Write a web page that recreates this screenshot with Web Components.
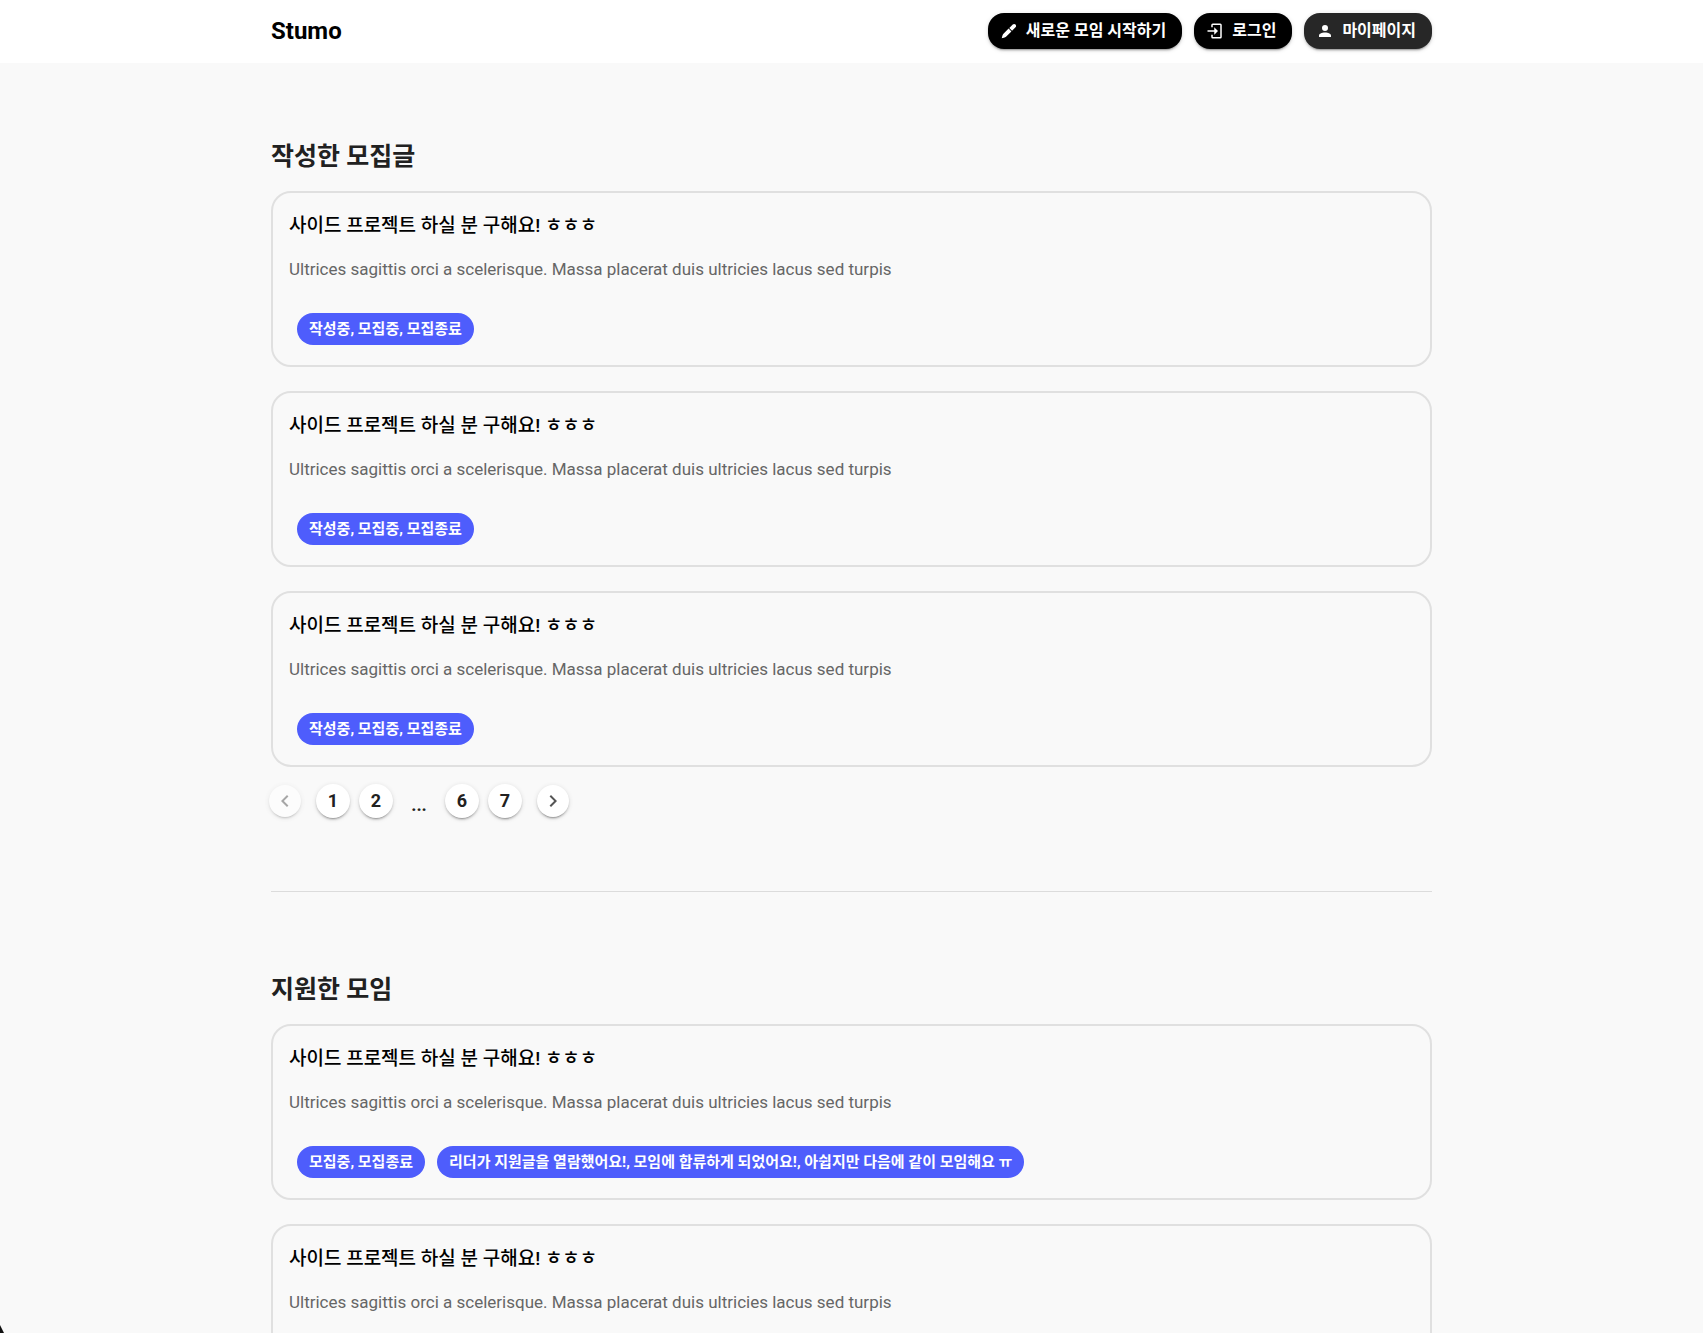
<!DOCTYPE html>
<html lang="ko">
<head>
<meta charset="utf-8">
<meta name="viewport" content="width=device-width, initial-scale=1">
<title>Stumo</title>
<style>
html, body { height: 100%; margin: 0; }
body { overflow: hidden; background: #f9f9f9; color: #212121; font-family: Roboto, "Noto Sans CJK KR", sans-serif; }
</style>
</head>
<body>
<stumo-page>
  <stumo-header slot="header">
    <stumo-action icon="pencil">새로운 모임 시작하기</stumo-action>
    <stumo-action icon="login">로그인</stumo-action>
    <stumo-action icon="account" active>마이페이지</stumo-action>
  </stumo-header>
  <stumo-section heading="작성한 모집글">
    <stumo-card><stumo-chip>작성중, 모집중, 모집종료</stumo-chip></stumo-card>
    <stumo-card><stumo-chip>작성중, 모집중, 모집종료</stumo-chip></stumo-card>
    <stumo-card><stumo-chip>작성중, 모집중, 모집종료</stumo-chip></stumo-card>
    <stumo-pager slot="footer"></stumo-pager>
  </stumo-section>
  <stumo-section heading="지원한 모임" divided>
    <stumo-card>
      <stumo-chip>모집중, 모집종료</stumo-chip>
      <stumo-chip>리더가 지원글을 열람했어요!, 모임에 합류하게 되었어요!, 아쉽지만 다음에 같이 모임해요 ㅠ</stumo-chip>
    </stumo-card>
    <stumo-card></stumo-card>
  </stumo-section>
</stumo-page>
<script>
const define = (name, html, setup) => {
  const template = document.createElement('template');
  template.innerHTML = html;
  customElements.define(name, class extends HTMLElement {
    constructor() {
      super();
      this.attachShadow({ mode: 'open' }).append(template.content.cloneNode(true));
    }
    connectedCallback() { if (setup) setup(this, this.shadowRoot); }
  });
};

const icons = {
  pencil: 'M20.7 3.3 C19.6 2.2 18 2.3 17 3.3 L12.4 7.9 L16.1 11.6 L20.7 7 C21.7 6 21.7 4.3 20.7 3.3 M11.5 8.8 L4.3 16 C3.5 16.8 2.5 20.8 2.3 21.7 C3.2 21.5 7.2 20.5 8 19.7 L15.2 12.5Z',
  login: 'M9 2H19A2 2 0 0 1 21 4V20A2 2 0 0 1 19 22H9A2 2 0 0 1 7 20V17H9V20H19V4H9V7H7V4A2 2 0 0 1 9 2M11 7L16 12L11 17V13H2V11H11Z',
  account: 'M12,4A4,4 0 0,1 16,8A4,4 0 0,1 12,12A4,4 0 0,1 8,8A4,4 0 0,1 12,4M12,14C16.42,14 20,15.79 20,18V20H4V18C4,15.79 7.58,14 12,14Z'
};

define('stumo-page', `
<style>
  :host { display: block; }
  main { max-width: 1161px; margin: 0 auto; }
  i { position: fixed; left: 0; bottom: 0; width: 4px; height: 8px; background: #111; clip-path: polygon(0 0, 100% 100%, 0 100%); }
</style>
<slot name="header"></slot>
<main><slot></slot></main>
<i></i>`);

define('stumo-header', `
<style>
  :host { display: block; background: #fff; }
  header { display: flex; align-items: center; justify-content: space-between; max-width: 1161px; height: 62px; margin: 0 auto; padding-bottom: 1px; }
  a { color: #000; font-size: 24px; line-height: 32px; font-weight: 700; text-decoration: none; }
  nav { display: flex; gap: 12px; }
</style>
<header><a href="#">Stumo</a><nav><slot></slot></nav></header>`);

define('stumo-action', `
<style>
  :host { display: block; }
  button { display: flex; align-items: center; gap: 8px; height: 36px; padding: 0 16px 0 12px; border: 0; border-radius: 16px;
    background: #000; color: #fff; font: 700 16px/24px Roboto, "Noto Sans CJK KR", sans-serif; white-space: nowrap;
    box-shadow: 0 3px 1px -2px rgba(0,0,0,.2), 0 2px 2px rgba(0,0,0,.14), 0 1px 5px rgba(0,0,0,.12); }
  :host([active]) button { background: #272727; }
  svg { width: 18px; height: 18px; fill: currentColor; }
</style>
<button type="button"><svg viewBox="0 0 24 24" aria-hidden="true"><path/></svg><slot></slot></button>`,
(host, root) => root.querySelector('path').setAttribute('d', icons[host.getAttribute('icon')]));

define('stumo-section', `
<style>
  :host { display: block; padding-top: 78px; }
  :host([divided]) { margin-top: 73px; padding-top: 82px; border-top: 1px solid #dcdcdc; }
  h2 { margin: 0 0 18px; font-size: 25px; line-height: 32px; font-weight: 700; }
  div { display: flex; flex-direction: column; gap: 24px; }
</style>
<h2></h2><div><slot></slot></div><slot name="footer"></slot>`,
(host, root) => root.querySelector('h2').textContent = host.getAttribute('heading'));

define('stumo-card', `
<style>
  :host { display: block; }
  article { padding: 17px 16px 20px; border: 2px solid #e0e0e0; border-radius: 20px; }
  h3 { margin: 0; color: #000; font-size: 19px; line-height: 32px; font-weight: 500; }
  p { margin: 16px 0 33px; color: #666; font-size: 17px; line-height: 22px; }
  div { display: flex; gap: 12px; min-height: 32px; padding: 0 8px; }
</style>
<article>
  <h3>사이드 프로젝트 하실 분 구해요! ㅎㅎㅎ</h3>
  <p>Ultrices sagittis orci a scelerisque. Massa placerat duis ultricies lacus sed turpis</p>
  <div><slot></slot></div>
</article>`);

define('stumo-chip', `
<style>
  :host { display: block; padding: 0 12px; border-radius: 16px; background: #4e5dfc; color: #fff; font-size: 15px; line-height: 32px; font-weight: 700; white-space: nowrap; }
</style>
<slot></slot>`);

define('stumo-pager', `
<style>
  :host { display: block; margin: 17px -2px 0; }
  nav { display: flex; align-items: center; gap: 15px; }
  ul { display: flex; gap: 9px; margin: 0; padding: 0; list-style: none; }
  li { width: 34px; height: 34px; text-align: center; font-size: 18px; line-height: 42px; font-weight: 700; }
  button { display: flex; align-items: center; justify-content: center; width: 100%; height: 100%; padding: 0; border: 0; border-radius: 50%; background: #fff; color: #212121; font: inherit; line-height: 32px;
    box-shadow: 0 3px 1px -2px rgba(0,0,0,.2), 0 2px 2px rgba(0,0,0,.14), 0 1px 5px rgba(0,0,0,.12); }
  nav > button { width: 32px; height: 32px; color: #555; }
  button:disabled { opacity: .5; }
  svg { width: 24px; height: 24px; fill: currentColor; }
</style>
<nav aria-label="페이지">
  <button type="button" aria-label="이전" disabled><svg viewBox="0 0 24 24"><path d="M15.41,16.58L10.83,12L15.41,7.41L14,6L8,12L14,18L15.41,16.58Z"/></svg></button>
  <ul>
    <li><button type="button">1</button></li>
    <li><button type="button">2</button></li>
    <li>...</li>
    <li><button type="button">6</button></li>
    <li><button type="button">7</button></li>
  </ul>
  <button type="button" aria-label="다음"><svg viewBox="0 0 24 24"><path d="M8.59,16.58L13.17,12L8.59,7.41L10,6L16,12L10,18L8.59,16.58Z"/></svg></button>
</nav>`);
</script>
</body>
</html>
